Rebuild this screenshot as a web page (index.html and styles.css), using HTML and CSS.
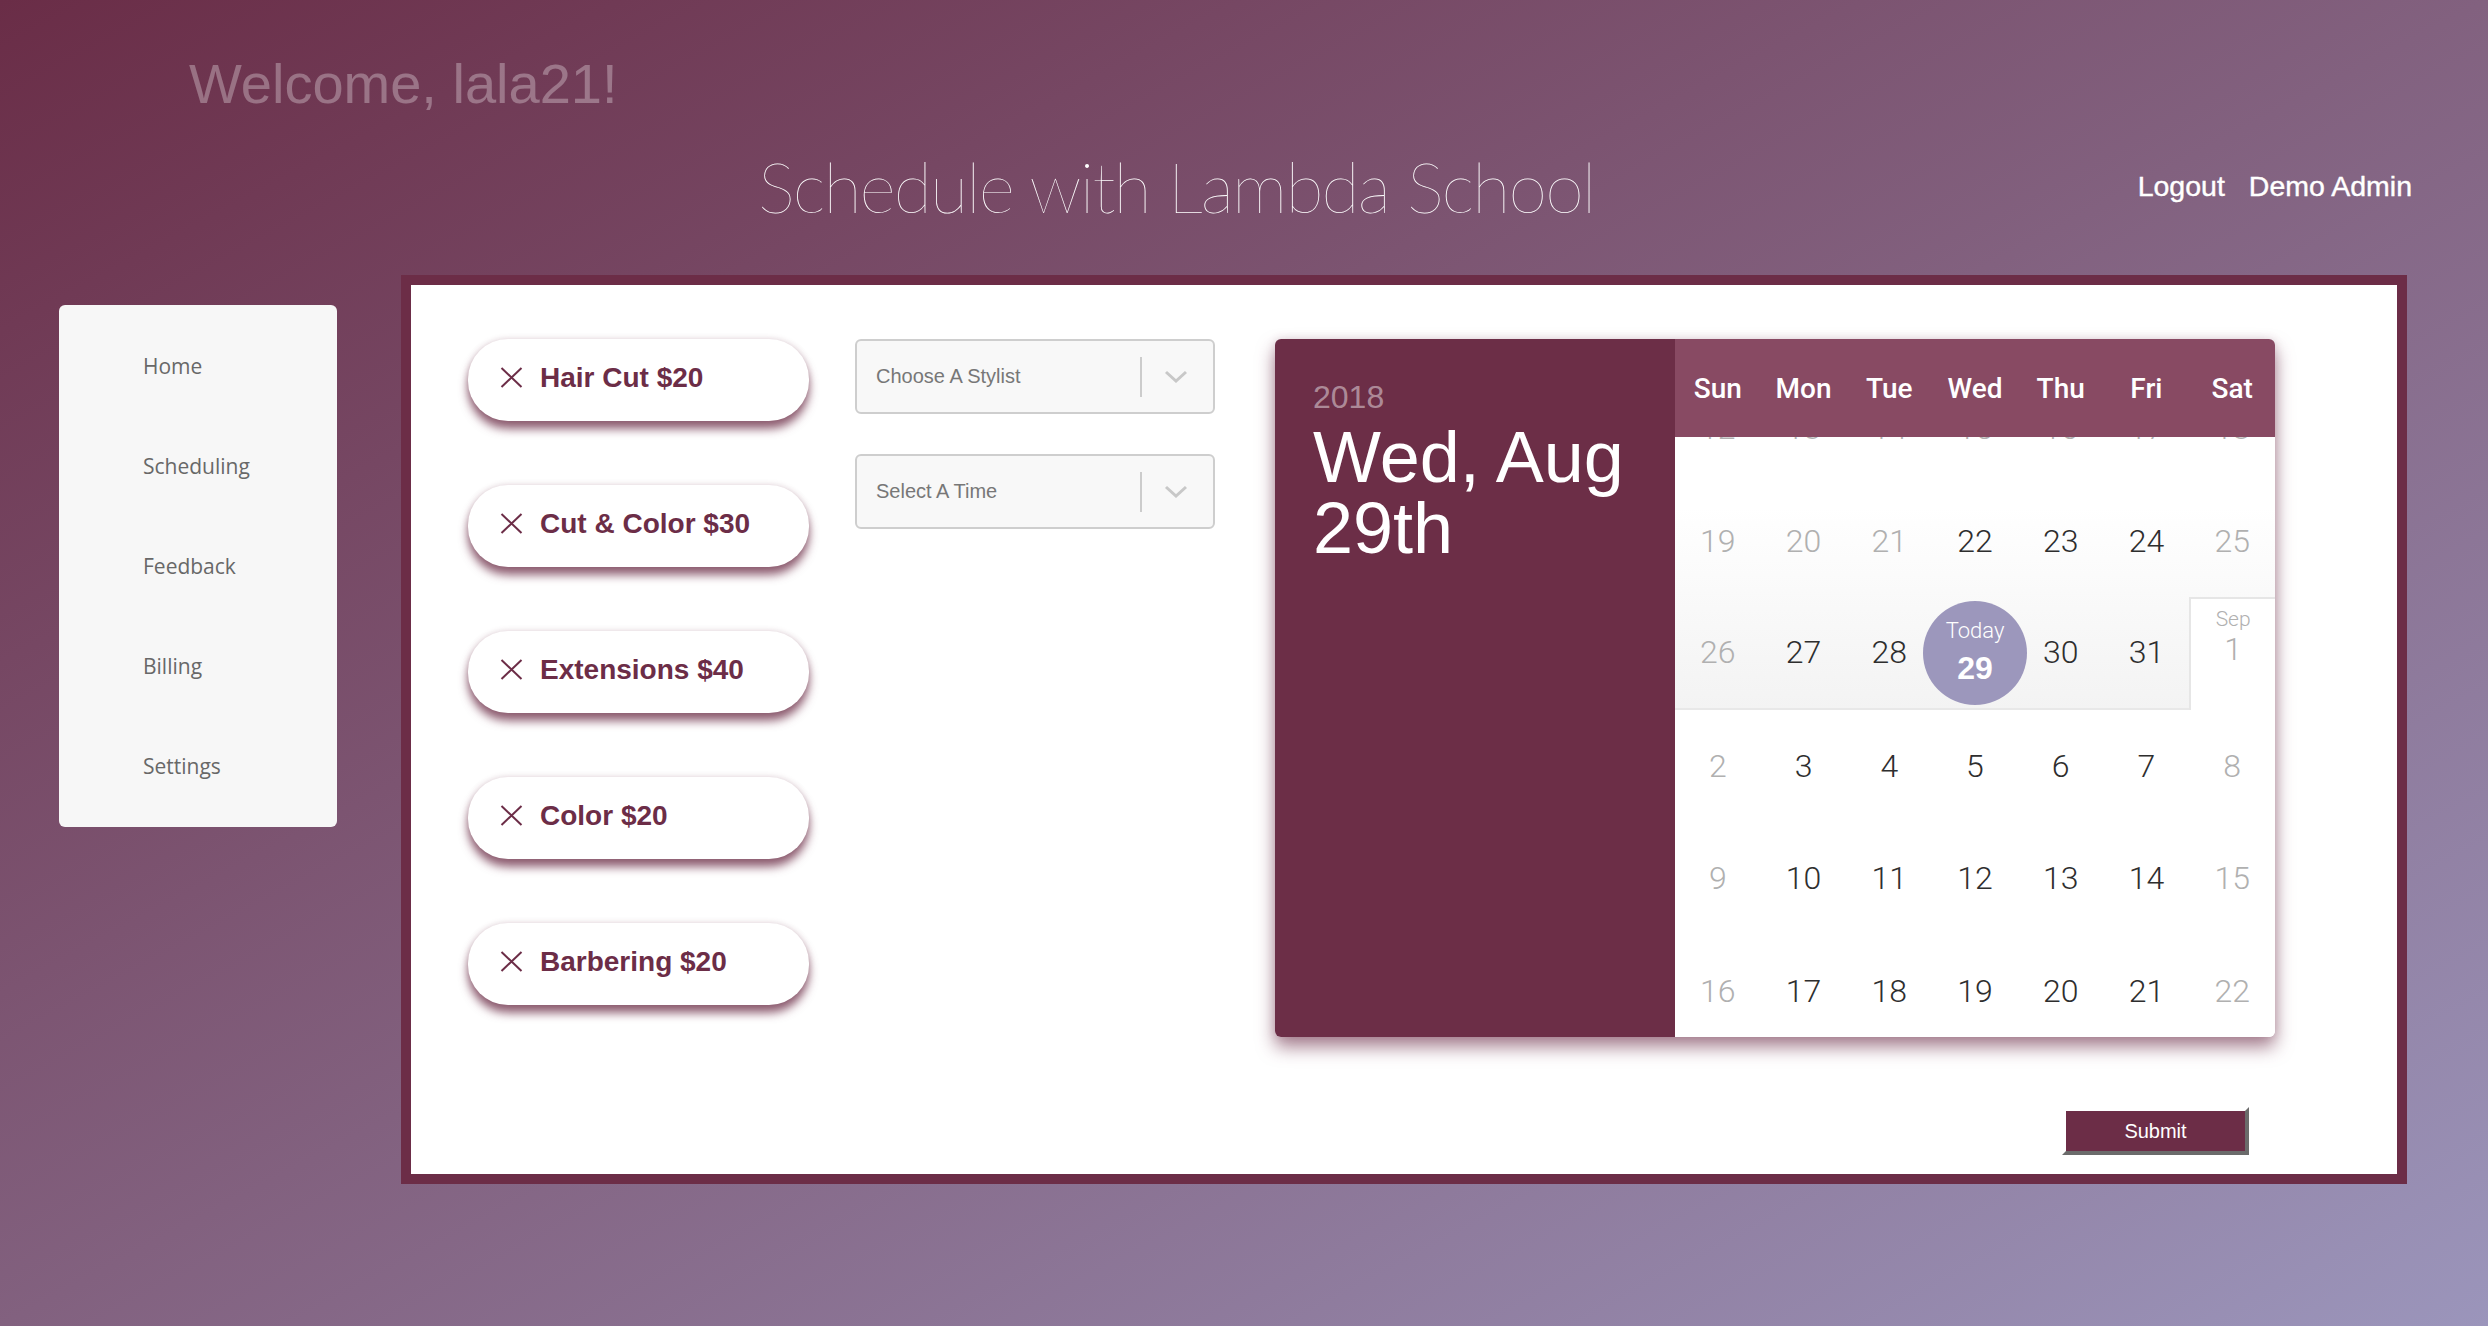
FILE: index.html
```html
<!DOCTYPE html>
<html lang="en">
<head>
<meta charset="utf-8">
<title>Schedule with Lambda School</title>
<link rel="stylesheet" href="styles.css">
</head>
<body>
<header class="top">
  <h2 class="welcome">Welcome, lala21!</h2>
  <div class="titlebar">
    <h1 class="title">Schedule with Lambda School</h1>
    <nav class="topnav"><a class="topnav-link">Logout</a><a class="topnav-link">Demo Admin</a></nav>
  </div>
</header>
<main class="main">
  <aside class="sidebar">
    <a class="side-link">Home</a>
    <a class="side-link">Scheduling</a>
    <a class="side-link">Feedback</a>
    <a class="side-link">Billing</a>
    <a class="side-link">Settings</a>
  </aside>
  <section class="panel">
    <div class="panel-row">
      <div class="services">
        <button class="pill"><svg class="x" viewBox="0 0 23 21" width="23" height="21"><path d="M1.5 1 L21.5 20 M21.5 1 L1.5 20" /></svg><span>Hair Cut $20</span></button>
        <button class="pill"><svg class="x" viewBox="0 0 23 21" width="23" height="21"><path d="M1.5 1 L21.5 20 M21.5 1 L1.5 20" /></svg><span>Cut &amp; Color $30</span></button>
        <button class="pill"><svg class="x" viewBox="0 0 23 21" width="23" height="21"><path d="M1.5 1 L21.5 20 M21.5 1 L1.5 20" /></svg><span>Extensions $40</span></button>
        <button class="pill"><svg class="x" viewBox="0 0 23 21" width="23" height="21"><path d="M1.5 1 L21.5 20 M21.5 1 L1.5 20" /></svg><span>Color $20</span></button>
        <button class="pill"><svg class="x" viewBox="0 0 23 21" width="23" height="21"><path d="M1.5 1 L21.5 20 M21.5 1 L1.5 20" /></svg><span>Barbering $20</span></button>
      </div>
      <div class="selects">
        <div class="select">
          <span class="select-label">Choose A Stylist</span>
          <span class="select-sep"></span>
          <svg class="chev" viewBox="0 0 24 13" width="24" height="13"><polyline points="2,2 12,11 22,2" /></svg>
        </div>
        <div class="select">
          <span class="select-label">Select A Time</span>
          <span class="select-sep"></span>
          <svg class="chev" viewBox="0 0 24 13" width="24" height="13"><polyline points="2,2 12,11 22,2" /></svg>
        </div>
      </div>
      <div class="calendar">
        <div class="cal-side">
          <div class="cal-year">2018</div>
          <div class="cal-date">Wed, Aug<br>29th</div>
        </div>
        <div class="cal-main">
          <div class="cal-head">
            <span>Sun</span><span>Mon</span><span>Tue</span><span>Wed</span><span>Thu</span><span>Fri</span><span>Sat</span>
          </div>
          <div class="cal-scroll">
            <div class="cal-inner">
              <div class="month-aug">
                <div class="week">
                  <span class="day dim">12</span><span class="day dim">13</span><span class="day dim">14</span><span class="day dim">15</span><span class="day dim">16</span><span class="day dim">17</span><span class="day dim">18</span>
                </div>
                <div class="week">
                  <span class="day dim">19</span><span class="day dim">20</span><span class="day dim">21</span><span class="day">22</span><span class="day">23</span><span class="day">24</span><span class="day dim">25</span>
                </div>
                <div class="week last-week">
                  <span class="day dim">26</span><span class="day">27</span><span class="day">28</span>
                  <span class="day today-cell"><span class="today"><span class="today-label">Today</span><span class="today-num">29</span></span></span>
                  <span class="day">30</span><span class="day">31</span>
                  <span class="day sep-first"><span class="sep-month">Sep</span><span class="sep-num">1</span></span>
                </div>
              </div>
              <div class="week">
                <span class="day dim">2</span><span class="day">3</span><span class="day">4</span><span class="day">5</span><span class="day">6</span><span class="day">7</span><span class="day dim">8</span>
              </div>
              <div class="week">
                <span class="day dim">9</span><span class="day">10</span><span class="day">11</span><span class="day">12</span><span class="day">13</span><span class="day">14</span><span class="day dim">15</span>
              </div>
              <div class="week">
                <span class="day dim">16</span><span class="day">17</span><span class="day">18</span><span class="day">19</span><span class="day">20</span><span class="day">21</span><span class="day dim">22</span>
              </div>
            </div>
          </div>
        </div>
      </div>
    </div>
    <div class="actions">
      <button class="submit">Submit</button>
    </div>
  </section>
</main>
</body>
</html>
```

FILE: styles.css
```css
html, body {
  margin: 0;
  padding: 0;
  height: 100%;
}

body {
  width: 2488px;
  height: 1326px;
  overflow: hidden;
  background: linear-gradient(to bottom right, #6a2d47 0%, #82617f 50%, #9b95bb 100%);
  font-family: "Liberation Sans", Arial, sans-serif;
}

.welcome {
  margin: 0;
  padding: 52px 0 0 189px;
  font-size: 56px;
  line-height: 64px;
  font-weight: normal;
  color: rgba(255, 255, 255, 0.3);
}

.titlebar {
  display: flex;
  align-items: flex-start;
  margin-top: 30px;
  height: 80px;
}

.title {
  margin: 0;
  padding-left: 758px;
  font-family: "Lato", sans-serif;
  font-weight: 200;
  font-size: 70px;
  line-height: 80px;
  letter-spacing: -1.9px;
  color: #ffffff;
  white-space: nowrap;
}

.topnav {
  margin-left: auto;
  margin-top: 24px;
  padding-right: 76px;
  display: flex;
  gap: 24px;
}

.topnav-link {
  font-size: 28.5px;
  line-height: 32px;
  color: #ffffff;
  -webkit-text-stroke: 0.4px #ffffff;
}

.main {
  display: flex;
  align-items: flex-start;
  margin-top: 49px;
  padding-left: 59px;
}

.sidebar {
  box-sizing: border-box;
  width: 278px;
  height: 522px;
  margin-top: 30px;
  padding: 11px 0 11px 84px;
  background: #f7f7f7;
  border-radius: 6px;
  display: flex;
  flex-direction: column;
}

.side-link {
  height: 100px;
  display: flex;
  align-items: center;
  font-family: "Open Sans", sans-serif;
  font-weight: 500;
  font-size: 21px;
  color: #686868;
}

.panel {
  box-sizing: border-box;
  width: 2006px;
  height: 909px;
  margin-left: 64px;
  border: 10px solid #6c2d47;
  background: #ffffff;
  padding: 54px 0 0 57px;
  display: flex;
  flex-direction: column;
}

.panel-row {
  display: flex;
  align-items: flex-start;
}

.services {
  display: flex;
  flex-direction: column;
  gap: 64px;
  width: 341px;
}

.pill {
  box-sizing: border-box;
  width: 341px;
  height: 82px;
  border: none;
  border-radius: 40px;
  background: #ffffff;
  box-shadow: 0 8px 10px rgba(108, 45, 71, 0.75), 0 0 6px rgba(108, 45, 71, 0.2);
  display: flex;
  align-items: center;
  gap: 17px;
  padding: 0 0 5px 32px;
  font-family: "Liberation Sans", Arial, sans-serif;
  font-weight: bold;
  font-size: 28px;
  color: #6c2d47;
}

.x {
  flex-shrink: 0;
  fill: none;
  stroke: #6c2d47;
  stroke-width: 2;
}

.selects {
  margin-left: 46px;
  display: flex;
  flex-direction: column;
  gap: 40px;
}

.select {
  box-sizing: border-box;
  width: 360px;
  height: 75px;
  border: 2px solid #cecece;
  border-radius: 6px;
  background: #f8f8f8;
  display: flex;
  align-items: center;
  padding-left: 19px;
}

.select-label {
  flex: 1;
  font-size: 20px;
  color: #777777;
}

.select-sep {
  width: 2px;
  height: 40px;
  background: #cccccc;
}

.chev {
  margin: 0 25px 0 22px;
  fill: none;
  stroke: #c8c8c8;
  stroke-width: 3;
}

.calendar {
  margin-left: 60px;
  width: 1000px;
  height: 698px;
  display: flex;
  border-radius: 6px;
  overflow: hidden;
  box-shadow: 0 10px 18px rgba(108, 45, 71, 0.6), 0 0 10px rgba(108, 45, 71, 0.15);
}

.cal-side {
  box-sizing: border-box;
  width: 400px;
  background: #6c2e47;
  padding: 38px 0 0 38px;
}

.cal-year {
  font-size: 32px;
  line-height: 40px;
  color: rgba(255, 255, 255, 0.46);
}

.cal-date {
  margin-top: 5px;
  font-size: 72px;
  line-height: 71px;
  color: #ffffff;
}

.cal-main {
  width: 600px;
  display: flex;
  flex-direction: column;
  background: #ffffff;
}

.cal-head {
  height: 98px;
  background: #884a63;
  display: grid;
  grid-template-columns: repeat(7, minmax(0, 1fr));
  align-items: center;
  text-align: center;
  font-family: "Roboto", "Liberation Sans", sans-serif;
  font-weight: 500;
  font-size: 28px;
  color: #ffffff;
}

.cal-scroll {
  height: 600px;
  overflow: hidden;
}

.cal-inner {
  margin-top: -65px;
}

.month-aug {
  background: linear-gradient(to bottom, #ffffff 0%, #ffffff 40%, #f3f3f3 100%);
}

.week {
  display: grid;
  grid-template-columns: repeat(7, minmax(0, 1fr));
  height: 112.5px;
}

.day {
  box-sizing: border-box;
  min-width: 0;
  display: flex;
  align-items: center;
  justify-content: center;
  font-family: "Roboto", "Liberation Sans", sans-serif;
  font-weight: 300;
  font-size: 32px;
  color: #2e2e2e;
}

.day.dim {
  color: #b0b0b0;
}

.last-week .day {
  border-bottom: 2px solid #e8e8e8;
}

.last-week .day.sep-first {
  border-bottom: none;
  border-top: 2px solid #e6e6e6;
  border-left: 2px solid #e6e6e6;
  background: #ffffff;
  flex-direction: column;
  justify-content: flex-start;
  padding-top: 8px;
  color: #b0b0b0;
}

.sep-month {
  font-size: 21px;
  line-height: 24px;
}

.sep-num {
  font-size: 32px;
  line-height: 36px;
}

.today {
  flex-shrink: 0;
  width: 104px;
  height: 104px;
  border-radius: 50%;
  background: #9c97bc;
  display: flex;
  flex-direction: column;
  align-items: center;
  justify-content: center;
  color: #ffffff;
  margin-top: 2px;
}

.today-label {
  font-size: 22px;
  line-height: 30px;
  font-weight: 300;
}

.today-num {
  font-family: "Liberation Sans", Arial, sans-serif;
  font-weight: bold;
  font-size: 32px;
  line-height: 44px;
}

.actions {
  display: flex;
  justify-content: flex-end;
  padding-right: 148px;
  margin-top: 70px;
}

.submit {
  box-sizing: border-box;
  width: 187px;
  height: 48px;
  border-width: 4px;
  border-style: solid;
  border-color: #ffffff #6b6b6b #6b6b6b #ffffff;
  background: #6c2d47;
  color: #ffffff;
  font-family: "Liberation Sans", Arial, sans-serif;
  font-size: 20px;
  padding: 0;
}
```
